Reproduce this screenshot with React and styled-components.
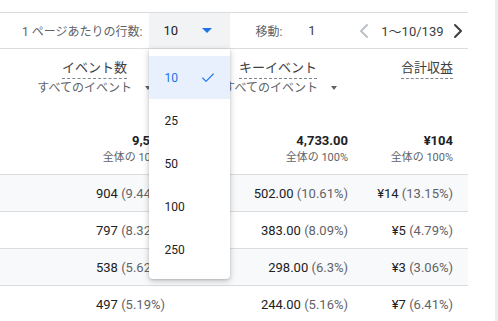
import styled, { createGlobalStyle } from 'styled-components'
import { Check, ChevronLeft, ChevronRight } from 'lucide-react'

const GlobalStyle = createGlobalStyle`
    body {
        margin: 0;
        background: #fff;
        font-family: Roboto, "Noto Sans CJK JP", sans-serif;
        color: #202124;
    }
`

const columns = [
    { title: 'イベント数', sub: 'すべてのイベント', total: '9,576', pct: '全体の 100%', titleGap: 38, subGap: 14 },
    { title: 'キーイベント', sub: 'すべてのイベント', total: '4,733.00', pct: '全体の 100%', titleGap: 31, subGap: 11 },
    { title: '合計収益', total: '¥104', pct: '全体の 100%' },
]

const rows = [
    ['904', '9.44%', '502.00', '10.61%', '¥14', '13.15%'],
    ['797', '8.32%', '383.00', '8.09%', '¥5', '4.79%'],
    ['538', '5.62%', '298.00', '6.3%', '¥3', '3.06%'],
    ['497', '5.19%', '244.00', '5.16%', '¥7', '6.41%'],
]

const sizes = [10, 25, 50, 100, 250]

function App () {
    return (
        <Page>
            <GlobalStyle />
            <Main>
                <Toolbar>
                    <Label>1 ページあたりの行数:</Label>
                    <Select>
                        <span>10</span>
                        <Caret />
                        <Menu>
                            { sizes.map((s) =>
                                <MenuItem key={s} $active={ s === 10 }>
                                    { s }
                                    { s === 10 && <Check size={16} strokeWidth={1.6} /> }
                                </MenuItem>
                            )}
                        </Menu>
                    </Select>
                    <Label $gap={25}>移動:</Label>
                    <GoInput>1</GoInput>
                    <Pager $muted><ChevronLeft size={24} strokeWidth={2} /></Pager>
                    <Range>1〜10/139</Range>
                    <Pager><ChevronRight size={24} strokeWidth={2} /></Pager>
                </Toolbar>

                <Grid>
                    { columns.map((c, i) =>
                        <HeadCell key={i}>
                            <Title $gap={ c.titleGap || 0 }>{ c.title }</Title>
                            { c.sub &&
                                <SubTitle $gap={ c.subGap }>
                                    { c.sub }
                                    <SmallCaret />
                                </SubTitle>
                            }
                        </HeadCell>
                    )}
                </Grid>

                <TotalRow>
                    { columns.map((c, i) =>
                        <TotalCell key={i}>
                            <b>{ c.total }</b>
                            <small>{ c.pct }</small>
                        </TotalCell>
                    )}
                </TotalRow>

                { rows.map((r, i) =>
                    <Row key={i} $striped={ i % 2 === 0 }>
                        <Cell>{ r[0] } <Pct>({ r[1] })</Pct></Cell>
                        <Cell>{ r[2] } <Pct>({ r[3] })</Pct></Cell>
                        <Cell>{ r[4] } <Pct>({ r[5] })</Pct></Cell>
                    </Row>
                )}
            </Main>
        </Page>
    )
}

const Page = styled.div`
    width: 495px;
    height: 321px;
    overflow: hidden;
    border-right: 3px solid #eceef0;
`

const Main = styled.div`
    width: 468px;
    padding-top: 12px;
`

const Toolbar = styled.div`
    display: flex;
    align-items: center;
    height: 35px;
    padding-left: 22px;
    border-top: 1px solid #dadce0;
    border-bottom: 1px solid #dadce0;
    font-size: 12px;
    white-space: nowrap;
    position: relative;
    z-index: 5;
    & > * {
        flex-shrink: 0;
    }
`

const Label = styled.span`
    color: #5f6368;
    margin-left: ${ (p) => p.$gap || 0 }px;
`

const Select = styled.div`
    position: relative;
    display: flex;
    align-items: center;
    justify-content: space-between;
    width: 81px;
    height: 100%;
    margin-left: 7px;
    padding: 0 18px 0 14px;
    box-sizing: border-box;
    background: #f1f3f4;
    font-size: 13px;
    color: #202124;
`

const Caret = styled.span`
    width: 0;
    height: 0;
    border-left: 5px solid transparent;
    border-right: 5px solid transparent;
    border-top: 5px solid #1a73e8;
`

const Menu = styled.div`
    position: absolute;
    top: calc(100% + 1px);
    left: 0;
    width: 100%;
    padding: 7px 0 8px;
    background: #fff;
    border-radius: 0 0 4px 4px;
    box-shadow: 0 2px 6px rgba(60, 64, 67, 0.3), 0 1px 2px rgba(60, 64, 67, 0.15);
`

const MenuItem = styled.div`
    display: flex;
    align-items: center;
    justify-content: space-between;
    height: 43px;
    padding: 0 14px 0 15px;
    font-size: 12px;
    color: ${ (p) => p.$active ? '#1a73e8' : '#202124' };
    background: ${ (p) => p.$active ? '#e8f0fe' : '#fff' };
`

const GoInput = styled.span`
    width: 28px;
    margin-left: 14px;
    padding-left: 12px;
    font-size: 13px;
    color: #3c4043;
`

const Pager = styled.span`
    display: flex;
    margin-left: ${ (p) => p.$muted ? 16 : 2 }px;
    color: ${ (p) => p.$muted ? '#bdc1c6' : '#3c4043' };
`

const Range = styled.span`
    margin-left: 5px;
    font-size: 13px;
    color: #3c4043;
`

const Grid = styled.div`
    display: grid;
    grid-template-columns: 180px 183px 105px;
    height: 73px;
`

const HeadCell = styled.div`
    display: flex;
    flex-direction: column;
    align-items: flex-end;
    padding: 10px 15px 0 0;
    overflow: hidden;
`

const Title = styled.span`
    font-size: 13px;
    color: #3c4043;
    line-height: 18px;
    margin-right: ${ (p) => p.$gap }px;
    border-bottom: 1px dashed #80868b;
    padding-bottom: 1px;
`

const SubTitle = styled.span`
    display: flex;
    align-items: center;
    margin-top: 1px;
    font-size: 12px;
    line-height: 16px;
    color: #5f6368;
    gap: 13px;
    white-space: nowrap;
    margin-right: ${ (p) => p.$gap }px;
`

const SmallCaret = styled.span`
    width: 0;
    height: 0;
    border-left: 3.5px solid transparent;
    border-right: 3.5px solid transparent;
    border-top: 4px solid #5f6368;
`

const TotalRow = styled.div`
    display: grid;
    grid-template-columns: 180px 183px 105px;
    height: 52px;
    border-bottom: 1px solid #dadce0;
`

const TotalCell = styled.div`
    display: flex;
    flex-direction: column;
    align-items: flex-end;
    padding: 10px 15px 0 0;
    b {
        font-size: 13px;
        font-weight: 700;
        line-height: 17px;
        color: #202124;
    }
    small {
        font-size: 11px;
        line-height: 18px;
        color: #5f6368;
    }
`

const Row = styled.div`
    display: grid;
    grid-template-columns: 180px 183px 105px;
    height: 36px;
    border-bottom: 1px solid #dadce0;
    background: ${ (p) => p.$striped ? '#f8f9fa' : '#fff' };
`

const Cell = styled.div`
    display: flex;
    align-items: center;
    justify-content: flex-end;
    padding-right: 15px;
    font-size: 13px;
    color: #202124;
    white-space: pre;
`

const Pct = styled.span`
    color: #5f6368;
`

export default App
